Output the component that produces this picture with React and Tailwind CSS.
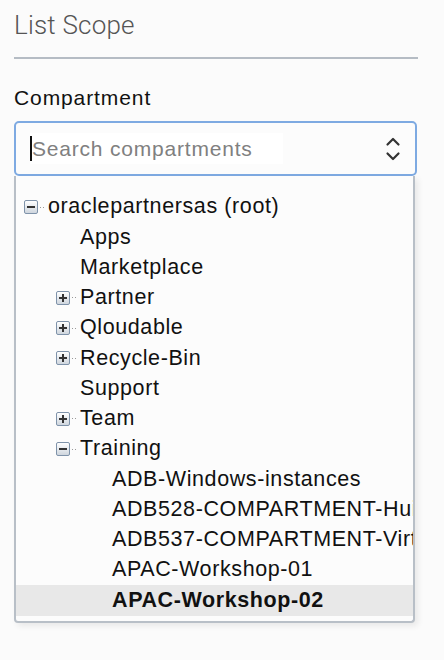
import React from 'react';

const tree = [
  { label: 'oraclepartnersas (root)', level: 0, toggle: 'minus' },
  { label: 'Apps', level: 1 },
  { label: 'Marketplace', level: 1 },
  { label: 'Partner', level: 1, toggle: 'plus' },
  { label: 'Qloudable', level: 1, toggle: 'plus' },
  { label: 'Recycle-Bin', level: 1, toggle: 'plus' },
  { label: 'Support', level: 1 },
  { label: 'Team', level: 1, toggle: 'plus' },
  { label: 'Training', level: 1, toggle: 'minus' },
  { label: 'ADB-Windows-instances', level: 2 },
  { label: 'ADB528-COMPARTMENT-Huiqing', level: 2 },
  { label: 'ADB537-COMPARTMENT-Virtual', level: 2 },
  { label: 'APAC-Workshop-01', level: 2 },
  { label: 'APAC-Workshop-02', level: 2, selected: true },
];

const indent = ['pl-[8px]', 'pl-[40px]', 'pl-[72px]'];

// little +/- box with dotted connector, like the old tree widgets
const Toggle = ({ type }) => (
  <span className="flex items-center w-[24px] flex-shrink-0">
    <span className="relative w-[14px] h-[14px] rounded-[2px] border border-[#7f93aa] bg-gradient-to-b from-white to-[#cfd6de] flex items-center justify-center">
      <span className="w-[8px] h-[2px] bg-[#333]"></span>
      {type === 'plus' && <span className="absolute w-[2px] h-[8px] bg-[#333]"></span>}
    </span>
    <span className="ml-[2px] w-[1px] h-[1px] bg-[#999]"></span>
    <span className="ml-[2px] w-[1px] h-[1px] bg-[#999]"></span>
  </span>
);

export default function App() {
  return (
    <div className="min-h-screen bg-[#fbfbfb] px-[14px] font-['Liberation_Sans',Arial,sans-serif]">
      <div className="w-[404px]">
        <div className="pt-[7px] pb-[14px] border-b-2 border-[#b5bcc4]">
          <h1 className="text-[26px] leading-[36px] font-light text-[#555] font-['Roboto',sans-serif] tracking-[0.2px]">List Scope</h1>
        </div>

        <div className="mt-[27px] text-[21px] leading-[24px] text-[#111] tracking-[0.9px]">Compartment</div>

        <div className="relative mt-[11px] w-[403px]">
          <div className="h-[55px] rounded-[5px] border-2 border-[#7eaae2] bg-[#fcfcfc] flex items-center pl-[14px] pr-[14px]">
            <div className="flex items-center bg-white pr-[30px]">
              <span className="w-[2px] h-[25px] bg-[#111]"></span>
              <span className="text-[21px] text-[#808080] tracking-[0.8px]">Search compartments</span>
            </div>
            <svg className="ml-auto" width="16" height="28" viewBox="0 0 16 28" fill="none" stroke="#333" strokeWidth="2.2" strokeLinecap="round" strokeLinejoin="round">
              <path d="M2.5 9.5 L8 4 L13.5 9.5" />
              <path d="M2.5 18.5 L8 24 L13.5 18.5" />
            </svg>
          </div>

          <div className="absolute left-0 top-full w-[401px] h-[447px] bg-[#fcfcfc] border-2 border-t-0 border-[#b8bfc7] rounded-b-[4px] shadow-[3px_3px_6px_rgba(0,0,0,0.08)] pt-[16px] overflow-hidden">
            {tree.map((node) => (
              <div
                key={node.label}
                className={`flex items-center h-[30.25px] whitespace-nowrap ${indent[node.level]} ${node.selected ? 'bg-[#e8e8e8] font-bold' : ''}`}
              >
                {node.toggle ? <Toggle type={node.toggle} /> : <span className="w-[24px] flex-shrink-0"></span>}
                <span className="text-[21.5px] leading-none text-[#111] tracking-[0.6px]">{node.label}</span>
              </div>
            ))}
          </div>
        </div>
      </div>
    </div>
  );
}
